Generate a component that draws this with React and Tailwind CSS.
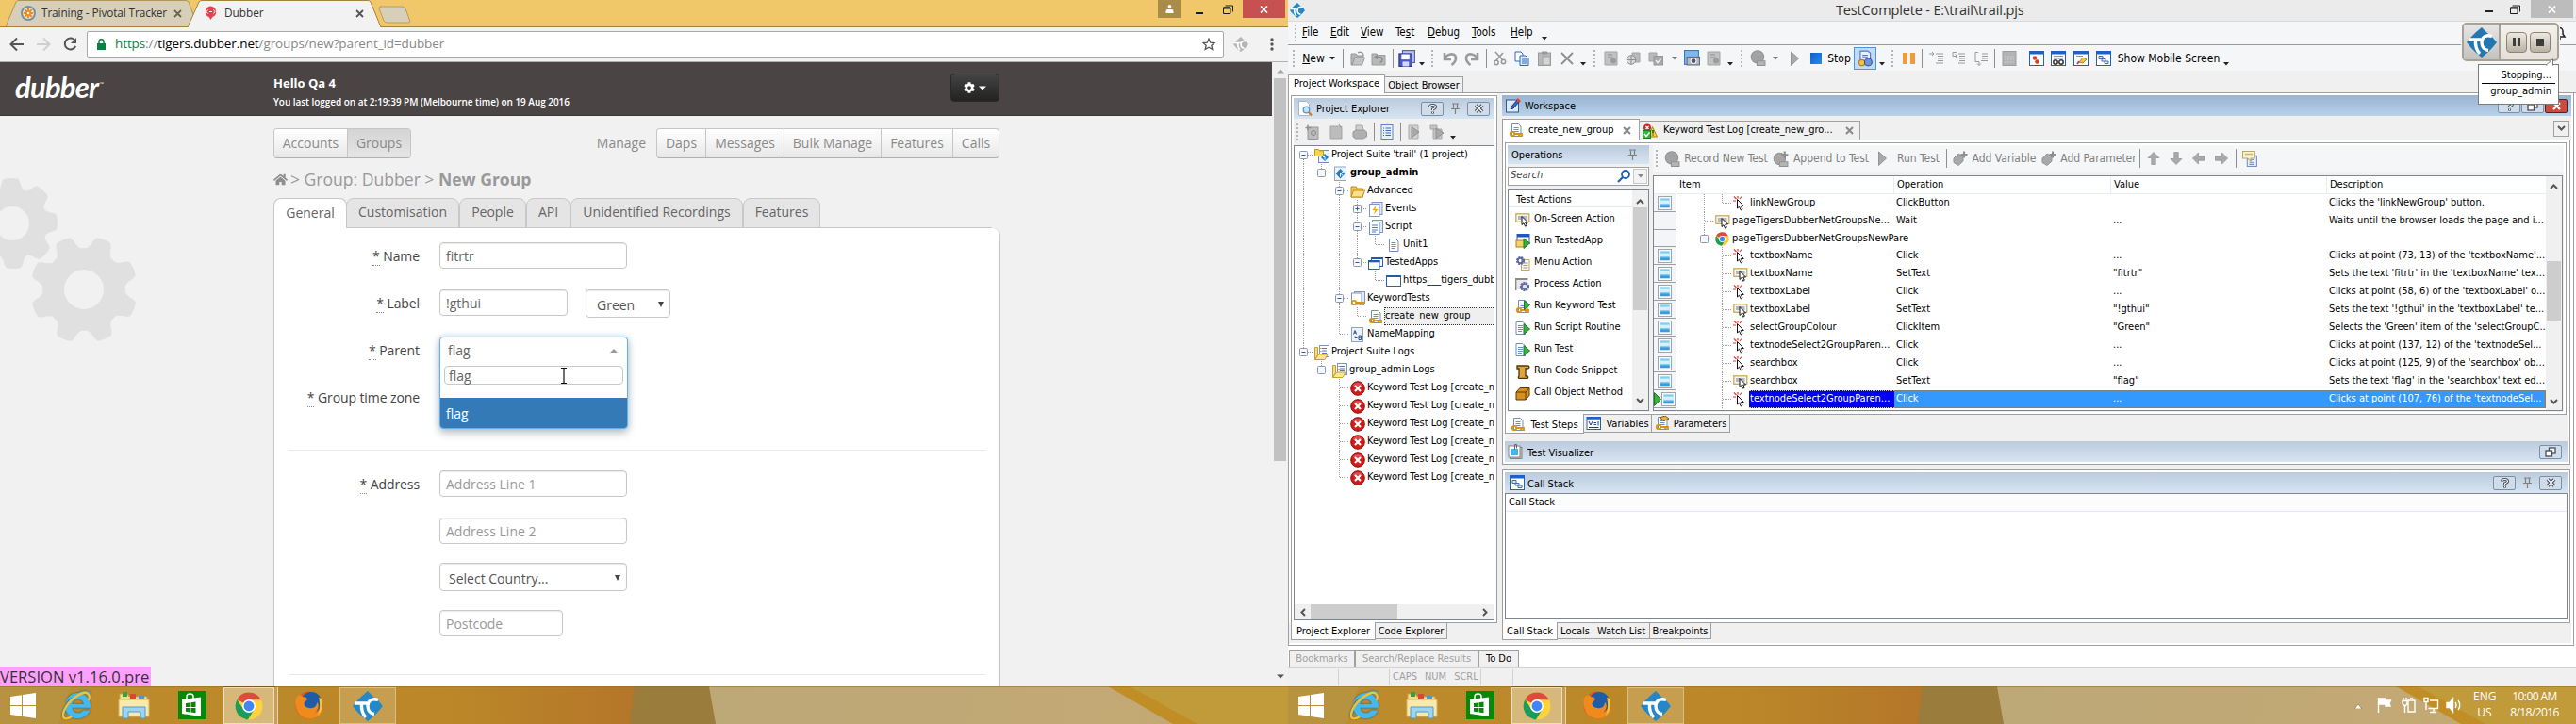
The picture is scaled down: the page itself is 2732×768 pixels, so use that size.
import React from "react";
import { FaInternetExplorer, FaCog, FaHome } from "react-icons/fa";

const UI = "font-['DejaVu_Sans_Condensed','DejaVu_Sans',sans-serif] font-stretch-condensed";

/* ---------- icon set ---------- */
const Svg = ({ s = 16, children, c = "" }) => (
  <svg width={s} height={s} viewBox="0 0 16 16" className={`shrink-0 ${c}`} fill="none">
    {children}
  </svg>
);

const TcLogo = ({ w = 24, h = 24, color = "#2488c8" }) => (
  <svg width={w} height={h} viewBox="0 0 32 32" className="shrink-0" fill="none">
    <path d="M16 0 L22 6 L27 10 L32 16 L27 22 L22 27 L16 32 L10 27 L5 22 L0 16 L5 10 L10 5 Z" fill={color} />
    <path d="M2 13 H15 M9.500 13 C9 19 10 24 14 28" stroke="#fff" strokeWidth="3.400" />
    <path d="M27 9.500 C20 7 16 11 16 16 C16 21 19 24 23 24.500" stroke="#fff" strokeWidth="3.400" />
  </svg>
);

const Chrome = ({ s = 15 }) => (
  <Svg s={s}>
    <circle cx="8" cy="8" r="7.700" fill="#fdd23c" />
    <path d="M8 8 L1.300 4.200 A7.700 7.700 0 0 1 14.800 4.400 L8 4.400 Z" fill="#dd4b3e" />
    <path d="M1.300 4.200 A7.700 7.700 0 0 0 7.400 15.700 L11 9.800 L8 8 L4.900 9.800 Z" fill="#1c9c5a" />
    <circle cx="8" cy="8" r="3.700" fill="#fff" />
    <circle cx="8" cy="8" r="2.900" fill="#4285f4" />
  </Svg>
);

const Page = ({ f = "#fff", k = "#6f8fc4" }) => (
  <>
    <path d="M3.500 1.500 h7 l2.500 2.500 v10.500 h-9.500 z" fill={f} stroke={k} />
    <path d="M5.500 5.500 h5 M5.500 7.500 h5 M5.500 9.500 h5 M5.500 11.500 h4" stroke={k} />
  </>
);
const Key = () => (
  <>
    <circle cx="4" cy="12" r="2.200" stroke="#d9930f" strokeWidth="1.800" />
    <path d="M6.500 12 h7.500 v3 M11 12 v2.500" stroke="#d9930f" strokeWidth="1.800" />
  </>
);

const I = {
  suite: () => (<Svg><rect x="4.500" y="2.500" width="11" height="13" fill="#eef4fc" stroke="#6f8fc4" /><path d="M0.500 1.500 h4 l1 1.500 h4 v5.500 h-9 z" fill="#f8d654" stroke="#c49a28" /><path d="M11 6 l4 4 -4 4 -4 -4 z" fill="#1f7fc0" /><path d="M9 9.500 h2 v3" stroke="#fff" /></Svg>),
  project: () => (<Svg><rect x="2.500" y="1" width="12" height="14.500" fill="#eef4fc" stroke="#8aa4cf" /><path d="M8.500 3 l5 5 -5 5.500 -5 -5.500 z" fill="#1f7fc0" /><path d="M5 7.500 h3.500 v4 M12 6 c-3 0 -3 4 -1 4" stroke="#fff" /></Svg>),
  folder: () => (<Svg><path d="M1 3 h5 l1.500 2 h6 v9 h-12.500 z" fill="#f2c94c" stroke="#b98a1e" /><path d="M3.500 7 h12 l-2.500 7 h-12 z" fill="#fbe28a" stroke="#b98a1e" /></Svg>),
  events: () => (<Svg><rect x="4" y="0.500" width="11" height="13" fill="#dfe9f8" stroke="#7d97c9" /><rect x="1.500" y="2.500" width="10.500" height="13" fill="#fff" stroke="#7d97c9" /><path d="M8.500 4 l-4 5 h3 l-2 5 5 -6 h-3 z" fill="#f5a600" /></Svg>),
  script: () => (<Svg><rect x="4.500" y="0.500" width="11" height="13" fill="#dfe9f8" stroke="#7d97c9" /><rect x="1.500" y="2.500" width="10.500" height="13" fill="#fff" stroke="#6f8fc4" /><path d="M4 6 h6 M4 8.500 h6 M4 11 h6 M4 13 h4" stroke="#5577bb" /></Svg>),
  unit: () => (<Svg><Page /></Svg>),
  apps: () => (<Svg><rect x="3.500" y="2.500" width="12" height="9" fill="#fff" stroke="#2d62a8" /><path d="M3 3 h13" stroke="#1f5cb0" strokeWidth="2" /><rect x="0.500" y="5.500" width="11.500" height="9" fill="#fff" stroke="#2d62a8" /><path d="M0 6.200 h12.500" stroke="#1f5cb0" strokeWidth="2.200" /></Svg>),
  app: () => (<Svg><rect x="0.500" y="2.500" width="15" height="11" fill="#fff" stroke="#2d62a8" /><path d="M0 3 h16" stroke="#1f5cb0" strokeWidth="2" /></Svg>),
  kts: () => (<Svg><rect x="4.500" y="0.500" width="11" height="13" fill="#dfe9f8" stroke="#7d97c9" /><rect x="1.500" y="2" width="10.500" height="12" fill="#fff" stroke="#7d97c9" /><Key /></Svg>),
  kt: () => (<Svg><Page /><Key /></Svg>),
  nm: () => (<Svg><rect x="1.500" y="0.500" width="12" height="15" fill="#eef3fb" stroke="#8aa4cf" /><path d="M3.500 7.500 l1.500 -4 1.500 4 M4 6 h2.500 M9 9 h2.500 v4.500 H9 z M9 11.200 h2.500 M5 9.500 v2 h2.500" stroke="#33507f" /></Svg>),
  logs: () => (<Svg><rect x="5.500" y="0.500" width="10" height="12" fill="#fff" stroke="#7d97c9" /><path d="M8 3.500 h5 M8 6 h5 M8 8.500 h5" stroke="#5577bb" /><path d="M7 3 v1 M7 6 v1" stroke="#d33" /><path d="M0.500 2.500 h3 v8 l-3 5 z" fill="#f6dd7e" stroke="#c79f35" /><path d="M0.500 15.500 l4 -5.500 h9.500 l-3 5.500 z" fill="#fbe795" stroke="#c79f35" /></Svg>),
  err: () => (<Svg><circle cx="8" cy="8" r="7.300" fill="#d11b1b" stroke="#8f1010" /><path d="M2.500 5 a6 5 0 0 1 11 0 a12 6 0 0 1 -11 0" fill="#ec6a6a" opacity=".6" /><path d="M5 5 l6 6 M11 5 l-6 6" stroke="#fff" strokeWidth="2.200" /></Svg>),
  click: () => (<Svg><path d="M0 5 h3 M1 0.500 l2.500 2.500 M5 0 v2.500 M9 0.500 l-2 2.500" stroke="#e23b2e" strokeWidth="1.200" /><path d="M4.500 3.500 v9.500 l2 -1.800 1.800 3.800 1.700 -1 -1.700 -3.500 h3 z" fill="#fff" stroke="#111" /></Svg>),
  screen: () => (<Svg><rect x="0.800" y="1.800" width="14" height="8.500" fill="#f1f3f6" stroke="#c7a54c" strokeWidth="1.200" /><rect x="3" y="4" width="9.500" height="4" fill="#b5b8be" /><path d="M7 4.500 v9 l2 -1.800 1.600 3.500 1.700 -1 -1.600 -3.200 h2.800 z" fill="#fff" stroke="#111" /></Svg>),
  runapp: () => (<Svg><rect x="2" y="0.500" width="13" height="10" fill="#fff" stroke="#2a5fc0" /><path d="M2 2 h13" stroke="#1e55c4" strokeWidth="3" /><rect x="1" y="7" width="9" height="7" fill="#f4d560" stroke="#a6842a" /><path d="M9 5 l6.500 5 -6.500 5.500 z" fill="#35b33c" stroke="#1b7a22" /></Svg>),
  menu: () => (<Svg><rect x="6.500" y="4.500" width="8.500" height="11" fill="#fdf6e3" stroke="#c7a55c" /><path d="M8.500 8 h5 M8.500 10.500 h5 M8.500 13 h5" stroke="#8b98b8" /><circle cx="5.500" cy="5.500" r="3.500" stroke="#5a6aa8" strokeWidth="2.200" strokeDasharray="2 .8" /><circle cx="5.500" cy="5.500" r="2.600" stroke="#5a6aa8" strokeWidth="1.600" /></Svg>),
  proc: () => (<Svg><path d="M0.500 14 v-12 h13" stroke="#8b8b8b" strokeWidth="2" /><rect x="2" y="3" width="11" height="10" fill="#e9e9e9" /><circle cx="10" cy="10" r="4" stroke="#5a6aa8" strokeWidth="2.200" strokeDasharray="2 .8" /><circle cx="10" cy="10" r="3" stroke="#5a6aa8" strokeWidth="1.600" /></Svg>),
  runkt: () => (<Svg><Page /><Key /><path d="M9.500 2 l6 4.500 -6 5 z" fill="#35b33c" stroke="#1b7a22" /></Svg>),
  runscr: () => (<Svg><g transform="translate(-2.500 0)"><Page /></g><path d="M9 3.500 l6.500 5.500 -6.500 5.500 z" fill="#35b33c" stroke="#1b7a22" /></Svg>),
  snip: () => (<Svg><path d="M2 2 h11 a2 1.500 0 0 1 0 3 h-2 v8 h2 a1.500 1.500 0 0 1 0 2.500 h-9 a1.500 1.500 0 0 1 0 -2.500 v-8 h-2 z" fill="#e0a63a" stroke="#4d3410" strokeWidth="1.300" /></Svg>),
  box: () => (<Svg><path d="M1 7 l4 -4.500 h10 v8 l-4 4.500 h-10 z" fill="#d88f1d" stroke="#5a3a08" /><path d="M1 7 h10 l4 -4.500 M11 7 v8" stroke="#5a3a08" /></Svg>),
  shot: () => (<Svg s={15}><rect x="0.500" y="0.500" width="15" height="15" fill="#fafbfc" stroke="#9ba0a8" /><rect x="2.500" y="2.500" width="11" height="10.500" fill="#7fd0f0" /><rect x="2.500" y="5" width="11" height="3.500" fill="#d8f1fb" /><rect x="2.500" y="10" width="11" height="3" fill="#3f98dc" /></Svg>),
  log: () => (<Svg><circle cx="5" cy="4.500" r="4" fill="#d8232a" /><path d="M3.500 3 l3 3 M6.500 3 l-3 3" stroke="#fff" strokeWidth="1.300" /><path d="M10.500 3.500 l5 10.500 h-9 z" fill="#f8d433" stroke="#a8850f" /><path d="M11 7 v3.500 M11 11.500 v1" stroke="#222" strokeWidth="1.300" /><rect x="0.500" y="7.500" width="8" height="8" fill="#35b33c" stroke="#1b7a22" /><path d="M2 11 l2 2.500 3.500 -4" stroke="#fff" strokeWidth="1.500" /></Svg>),
  pen: () => (<Svg><rect x="0.500" y="2" width="13" height="13" fill="#dde9fb" stroke="#34558f" /><path d="M5 12 l1 -3 6.500 -7.500 2 2 -6.500 7.500 z" fill="#3a66c9" stroke="#1d3566" /><path d="M12 1 l3 3" stroke="#e0452e" strokeWidth="2.500" /></Svg>),
  vars: () => (<Svg><rect x="1" y="1.500" width="14.500" height="13" fill="#fff" stroke="#1d63c4" /><path d="M1 2.500 h14.500" stroke="#1d63c4" strokeWidth="2.500" /><path d="M3 6 l2 4 2 -4 M8.500 7.500 h2.500 M8.500 9.500 h2.500 M13 6 v4.500 M3 12.500 h10.500" stroke="#1c3c78" /></Svg>),
  params: () => (<Svg><Page /><Key /><path d="M5 2 l6 -2 4 3 -5 2.500 z" fill="#e8b63a" stroke="#7a5a10" /></Svg>),
  vis: () => (<Svg><rect x="2.500" y="3.500" width="12.500" height="12" fill="#bbb" stroke="#888" /><rect x="1" y="2" width="12" height="12" fill="#fff" stroke="#888" /><rect x="3" y="5" width="8" height="7" fill="#45b4e8" /><path d="M7.500 5.500 v-5 h2 v4" stroke="#667" /></Svg>),
  stack: () => (<Svg><rect x="0.500" y="0.500" width="15" height="15" fill="#fff" stroke="#1d63c4" /><path d="M0.500 2 h15" stroke="#1d63c4" strokeWidth="3" /><path d="M3 5.500 h4 v3 h-4 z M6 8.500 h4 v2.500 h-4 z M9 11 h4 v2.500 h-4 z" fill="#dde8fa" stroke="#466db0" /></Svg>),
  explorer: () => (<Svg><path d="M1.500 0.500 h8 l3 3 v12 h-11 z" fill="#fff" stroke="#a9b6c8" /><circle cx="9.500" cy="9.500" r="3.300" fill="#bfe3f7" stroke="#5e93bd" strokeWidth="1.300" /><path d="M12 12 l3 3.500" stroke="#d07830" strokeWidth="2" /></Svg>),
  blueDoc: () => (<Svg><rect x="2" y="0.500" width="12" height="15" fill="#e8f0fc" stroke="#5d83c6" /><path d="M4 4 h1 M4 6.500 h1 M4 9 h1 M4 11.500 h1 M6.500 4 h5.500 M6.500 6.500 h5.500 M6.500 9 h5.500 M6.500 11.500 h5.500" stroke="#3c66b3" /></Svg>),
  gNew: () => (<Svg><path d="M3 3 h11 v12.500 h-11 z" fill="#bdbdbd" stroke="#9a9a9a" /><path d="M3 0.500 v6 M0.500 3.500 h6" stroke="#8f8f8f" strokeWidth="1.500" /><circle cx="9" cy="9" r="2.500" stroke="#8a8a8a" /></Svg>),
  gPage: () => (<Svg><path d="M2 2 h10 l2 2 v11 h-12 z" fill="#bcbcbc" stroke="#a5a5a5" /><path d="M11 0 l1.500 2 2 1" stroke="#999" /></Svg>),
  gPrint: () => (<Svg><path d="M4 1 h7 l1 6 h-8 z" fill="#cfcfcf" stroke="#a5a5a5" /><path d="M1 8 l3 -2 h9 l2.500 2 v5 l-4 2 h-8 l-2.500 -2 z" fill="#b0b0b0" stroke="#989898" /></Svg>),
  gPlay1: () => (<Svg><path d="M2 1 h10 v14 h-10 z" fill="#d2d2d2" stroke="#a8a8a8" /><path d="M5 2.500 l8 5.500 -8 6 z" fill="#a9a9a9" stroke="#929292" /></Svg>),
  gPlay2: () => (<Svg><path d="M1 1 h7 v4 h-7 z M4 5 h9 v10 h-9 z" fill="#c4c4c4" stroke="#a8a8a8" /><path d="M7 4 l8 5 -8 5.500 z" fill="#a9a9a9" stroke="#929292" /></Svg>),
  open: () => (<Svg><path d="M1 3 h5 l2 2 h6 v2 h-9 l-3 8 h-1 z" fill="#b5b5b5" stroke="#999" /><path d="M5 7 h10.500 l-3 8 h-10.500 z" fill="#c4c4c4" stroke="#999" /><path d="M8 2 c3 -2 6 0 6 3" stroke="#999" strokeWidth="1.500" /></Svg>),
  reopen: () => (<Svg><path d="M1 3 h5 l1.500 1.500 h7.500 v10.500 h-14 z" fill="#b8b8b8" stroke="#9c9c9c" /><path d="M5 6.500 h4 q3 0 3 3 q0 2 -2.500 3 M7 4.500 l-2.500 2 2.500 2" stroke="#8a8a8a" strokeWidth="1.400" /></Svg>),
  save: () => (<Svg s={18}><rect x="4" y="0.500" width="11.500" height="11.500" fill="#b9c0ea" stroke="#5560b4" /><rect x="0.800" y="3.500" width="12" height="12" fill="#4d5ac4" stroke="#2c368c" /><rect x="3" y="4" width="7.500" height="5" fill="#fff" /><rect x="4" y="11" width="6" height="4.500" fill="#d5d9f5" /></Svg>),
  undo: () => (<Svg><path d="M2 2 v7 h7 M2.500 8.500 C4 3 13 1 14 7 C14.500 11 12 13 9.500 15" stroke="#9b9b9b" strokeWidth="2.600" /></Svg>),
  redo: () => (<Svg c="-scale-x-100"><path d="M2 2 v7 h7 M2.500 8.500 C4 3 13 1 14 7 C14.500 11 12 13 9.500 15" stroke="#9b9b9b" strokeWidth="2.600" /></Svg>),
  cut: () => (<Svg><path d="M3 1 l8 9 M11 2 l-7 8" stroke="#999" strokeWidth="1.700" /><circle cx="4" cy="12.500" r="2.200" stroke="#999" strokeWidth="1.500" /><circle cx="11.500" cy="11.500" r="2.200" stroke="#999" strokeWidth="1.500" /></Svg>),
  copy: () => (<Svg><path d="M1 1 h6 l2 2 v8 h-8 z" fill="#fff" stroke="#2f66c4" /><path d="M6 5 h6 l3 3 v7.500 h-9 z" fill="#dfeafc" stroke="#2f66c4" /><path d="M8 9 h5 M8 11 h5 M8 13 h5" stroke="#2f66c4" /></Svg>),
  paste: () => (<Svg><rect x="1.500" y="2" width="13" height="13.500" fill="#b9b9b9" stroke="#999" /><rect x="5" y="0.500" width="6" height="3" fill="#999" /><rect x="6" y="6" width="8" height="9" fill="#d5d5d5" stroke="#a4a4a4" /></Svg>),
  del: () => (<Svg><path d="M2 2 l12 12 M14 2 l-12 12" stroke="#8e8e8e" strokeWidth="1.800" /></Svg>),
  g1: () => (<Svg><path d="M1 1 h13 v14 h-13 z" fill="#c2c2c2" stroke="#a3a3a3" /><path d="M4 4 h5 M4 7 h6" stroke="#8f8f8f" /><circle cx="10" cy="10.500" r="3" fill="#9c9c9c" /></Svg>),
  g2: () => (<Svg><path d="M7 2 h8 v10 h-8 z" fill="#b9b9b9" stroke="#a3a3a3" /><circle cx="6" cy="9.500" r="4.800" fill="#d8d8d8" stroke="#8f8f8f" /><path d="M1 9.500 h10 M6 5 v9" stroke="#8f8f8f" /></Svg>),
  g3: () => (<Svg><path d="M1 2 h8 v9 h-8 z" fill="#bbb" stroke="#a3a3a3" /><rect x="6" y="5.500" width="9.500" height="9.500" fill="#a9a9a9" stroke="#979797" /><path d="M8 10 l2 2.500 3.500 -4" stroke="#ececec" strokeWidth="1.500" /></Svg>),
  cam: () => (<Svg s={17}><rect x="0.500" y="0.500" width="14" height="14" fill="#7db9ec" stroke="#3f78bd" /><rect x="3" y="7" width="12.500" height="8" fill="#b5bac2" stroke="#666e7a" /><circle cx="9.500" cy="11" r="2.700" fill="#4e5663" stroke="#eef" /></Svg>),
  rec: () => (<Svg s={17}><circle cx="7.500" cy="7" r="6.300" fill="#a3a3a3" stroke="#929292" /><path d="M7 11 h8 v4.500 h-8 z" fill="#b5b5b5" stroke="#929292" /></Svg>),
  play: () => (<Svg><path d="M4.500 1 l8 7 -8 7.500 z" fill="#a9a9a9" stroke="#939393" /></Svg>),
  active: () => (<Svg s={18}><path d="M3.500 1 h7 l2.500 2 v11 h-9.500 z" fill="#e9f0fb" stroke="#5577bb" /><path d="M5.500 5 h5 M5.500 7 h5" stroke="#5577bb" /><circle cx="5" cy="12" r="2.800" fill="#f3c243" stroke="#b0831a" /><circle cx="11" cy="11.500" r="3.500" fill="#6e95d8" stroke="#33569c" /></Svg>),
  step: () => (<Svg><path d="M0 3 h5 M3 1 l2 2 -2 2" stroke="#9a9a9a" /><path d="M7 3 h8 M9 5.500 h6 M9 8 h6 M9 10.500 h6 M7 13 h8" stroke="#9a9a9a" strokeWidth="1.200" /></Svg>),
  step2: () => (<Svg><path d="M6 1.500 h-4 v4 h4 M4.500 3.500 l2 2 -2 2" stroke="#9a9a9a" /><path d="M8 3 h7 M9 5.500 h6 M9 8 h6 M9 10.500 h6 M8 13 h7" stroke="#9a9a9a" strokeWidth="1.200" /></Svg>),
  step3: () => (<Svg><path d="M5 1.500 h-3 v10 h4 v4 M4 13.500 l2 2 2 -2" stroke="#9a9a9a" /><path d="M9 3 h6 M9 5.500 h6 M9 8 h6 M8 10.500 h7" stroke="#9a9a9a" strokeWidth="1.200" /></Svg>),
  gcalc: () => (<Svg><rect x="1" y="0.500" width="14" height="15" fill="#b3b3b3" stroke="#9e9e9e" /><path d="M3 6 h10 M3 9 h10 M3 12 h10" stroke="#cfcfcf" strokeDasharray="2 1" /></Svg>),
  w1: () => (<Svg><rect x="0.500" y="0.500" width="15" height="15" fill="#fff" stroke="#1d63c4" /><path d="M0.500 2 h15" stroke="#1d63c4" strokeWidth="3" /><circle cx="6" cy="7.500" r="2.300" fill="#d4402f" /><circle cx="8.500" cy="11.500" r="2.300" fill="#d4402f" /></Svg>),
  w2: () => (<Svg><rect x="0.500" y="0.500" width="15" height="15" fill="#fff" stroke="#1d63c4" /><path d="M0.500 2 h15" stroke="#1d63c4" strokeWidth="3" /><path d="M3 5.500 h10 M3 8 h10" stroke="#7b96c4" /><circle cx="5" cy="12" r="2.200" stroke="#333" strokeWidth="1.500" /><circle cx="11" cy="12" r="2.200" stroke="#333" strokeWidth="1.500" /></Svg>),
  w3: () => (<Svg><rect x="0.500" y="0.500" width="15" height="15" fill="#fff" stroke="#1d63c4" /><path d="M0.500 2 h15" stroke="#1d63c4" strokeWidth="3" /><path d="M3 5.500 h7" stroke="#7b96c4" /><path d="M6 12 l4 -5 4 2 -4 4 z" fill="#f3c243" stroke="#b0831a" /><path d="M4 14 l2 -3" stroke="#b03bb5" strokeWidth="2" /></Svg>),
  addv: () => (<Svg><path d="M1 8 l5 -5 5 3 v5 l-5 4.500 -5 -3 z" fill="#a9a9a9" stroke="#959595" /><path d="M12 0.500 v7 M8.500 4 h7" stroke="#8e8e8e" strokeWidth="2" /></Svg>),
  apprec: () => (<Svg s={17}><circle cx="7" cy="8" r="5.800" fill="#a6a6a6" stroke="#929292" /><path d="M7 11 h8 v4.500 h-8 z" fill="#b5b5b5" stroke="#929292" /><path d="M12 0.500 v7 M8.500 4 h7" stroke="#8e8e8e" strokeWidth="2" /></Svg>),
  up: (r) => (<Svg c={r}><path d="M8 1.500 l6 6 h-3.800 v7 h-4.400 v-7 h-3.800 z" fill="#a9a9a9" stroke="#989898" strokeWidth=".8" /></Svg>),
  note: () => (<Svg s={17}><rect x="5" y="5" width="9.500" height="10.500" fill="#e8f0fc" stroke="#7290c4" /><path d="M7 9 h5 M7 11.500 h5 M7 13.500 h5" stroke="#7290c4" /><path d="M0.500 0.500 h12 v7 h-4 v3 l-3 -3 h-5 z" fill="#fbf5da" stroke="#b9a564" /><path d="M2.500 3 h8 M2.500 5 h8" stroke="#b9a564" /></Svg>),
};

/* ---------- small building blocks ---------- */
const Grip = () => <div className="w-[2px] h-[18px] bg-[repeating-linear-gradient(180deg,#b4b4b4_0px,#b4b4b4_2px,transparent_2px,transparent_4px)]" />;
const Sep = () => <div className="w-px h-5 bg-[#8f8f8f]" />;
const C = ({ w, children, c = "" }) => <div className={`shrink-0 h-full flex items-center justify-center ${w} ${c}`}>{children}</div>;
const Down = ({ f = "#222" }) => <svg width="6" height="4" viewBox="0 0 6 4"><path d="M0 0 h6 l-3 3.500 z" fill={f} /></svg>;
const Low = () => <div className="pt-3"><Down /></div>;
const Chev = ({ r = "" }) => <svg width="9" height="7" viewBox="0 0 9 7" className={r}><path d="M1 1 l3.500 3.500 3.500 -3.500" fill="none" stroke="#555" strokeWidth="2" /></svg>;
const Pin = () => <svg width="11" height="12" viewBox="0 0 11 12" fill="none"><path d="M2 1 h7 M3.500 1 v5 M7.500 1 v5 M1 6.500 h9 M5.500 7 v5" stroke="#808080" strokeWidth="1.200" /></svg>;
const Btn = ({ t }) => (
  <div className="w-6 h-[15px] rounded-[2px] border border-[#7f8ea8] bg-[#cfdcea] flex items-center justify-center">
    {t === "?" && <svg width="9" height="11" viewBox="0 0 9 11" fill="none"><path d="M1.500 3.500 Q1.500 1.500 4.500 1.500 Q7.500 1.500 7.500 3.500 Q7.500 4.800 4.500 6 V7 M4.500 8.500 v2" stroke="#444c5a" strokeWidth="3" /><path d="M1.500 3.500 Q1.500 1.500 4.500 1.500 Q7.500 1.500 7.500 3.500 Q7.500 4.800 4.500 6 V7 M4.500 8.700 v1.300" stroke="#fff" strokeWidth="1.200" /></svg>}
    {t === "x" && <svg width="11" height="10" viewBox="0 0 11 10"><path d="M2 1.500 l7 7 M9 1.500 l-7 7" stroke="#444c5a" strokeWidth="3.600" /><path d="M2 1.500 l7 7 M9 1.500 l-7 7" stroke="#fff" strokeWidth="1.400" /></svg>}
    {t === "r" && <svg width="12" height="11" viewBox="0 0 12 11" fill="none"><rect x="4.500" y="1" width="6.500" height="6" fill="#fff" stroke="#444c5a" strokeWidth="1.300" /><rect x="1" y="4" width="6.500" height="6" fill="#fff" stroke="#444c5a" strokeWidth="1.300" /></svg>}
  </div>
);
const Restore = () => <svg width="11" height="10" viewBox="0 0 11 10" fill="none"><path d="M0.500 3 h7.500 v6.500 h-7.500 z M2.500 1 h8 v6.500" stroke="#1b1b1b" /><path d="M0.500 3.500 h7.500" stroke="#1b1b1b" strokeWidth="2" /></svg>;

/* one 19px wide cell of tree guide lines */
const Guide = ({ k }) => {
  const ln = { stroke: "#9a9a9a", strokeDasharray: "1 1" };
  const box = "eEPf".includes(k);
  return (
    <svg width="19" height="19" viewBox="0 0 19 19" className="shrink-0" fill="none">
      {"|tEP".includes(k) && <path d="M9.500 0 v19" {...ln} />}
      {"le".includes(k) && <path d="M9.500 0 v9" {...ln} />}
      {k === "f" && <path d="M9.500 10 v9" {...ln} />}
      {k !== "|" && k !== " " && <path d="M10 9.500 h9" {...ln} />}
      {box && <rect x="5.500" y="5.500" width="8" height="8" rx="1" fill="#f6f8fb" stroke="#8e99a8" />}
      {box && <path d="M7.500 9.500 h4" stroke="#3355a8" />}
      {k === "P" && <path d="M9.500 7.500 v4" stroke="#3355a8" />}
    </svg>
  );
};

/* ---------- browser window ---------- */
const field = "border border-[#c8c8c8] rounded-[4px] bg-white flex items-center text-[14px] shadow-[inset_0_1px_1px_rgba(0,0,0,0.08)] font-['Open_Sans',sans-serif]";
const Label = ({ children }) => (
  <div className="w-[154px] text-right text-[14px] leading-5 text-[#444] pt-[5px] tracking-[-0.1px]">
    {children && <><span className="border-b border-dotted border-[#888]">*</span> {children}</>}
  </div>
);
const navGroup = "flex border border-[#c6c6c6] border-b-[#b0b0b0] rounded-[4px] overflow-hidden [&>div]:pb-px";

function Browser() {
  return (
    <div className="w-[1366px] h-[728px] flex flex-col bg-[#f1f1f1] font-['Open_Sans',sans-serif] overflow-hidden">
      <div className="h-[29px] bg-[#f0c869] border-b border-[#a5833b] flex shrink-0 relative">
        <div className="relative w-[202px] h-[29px] ml-1">
          <svg className="absolute left-0 top-0" width="206" height="28" viewBox="0 0 206 28"><path d="M2 28.500 L13 2 Q14 0.500 16 0.500 H193 Q195 0.500 196 2 L206 28.500" fill="#d8cfb8" stroke="#b09557" /></svg>
          <div className="relative flex items-center h-full pl-[18px] pb-px text-[11.800px] text-[#333] tracking-[-0.1px]">
            <svg width="16" height="16" viewBox="0 0 16 16" className="mr-1.5"><circle cx="8" cy="8" r="7" fill="#f4e5cf" stroke="#6f93a8" strokeWidth="2" /><path d="M8 2.800 v10.400 M2.800 8 h10.400 M4.300 4.300 l7.400 7.400 M11.700 4.300 l-7.400 7.400" stroke="#f08a24" strokeWidth="2.200" /><circle cx="8" cy="8" r="1.200" fill="#fff" /></svg>
            <span className="w-[140px] whitespace-nowrap">Training - Pivotal Tracker</span>
            <svg width="9" height="9" viewBox="0 0 9 9"><path d="M1 1 l7 7 M8 1 l-7 7" stroke="#6b6552" strokeWidth="1.800" /></svg>
          </div>
        </div>
        <div className="relative w-[196px] h-[29px] -ml-[7px]">
          <svg className="absolute left-0 top-0" width="206" height="29" viewBox="0 0 206 29"><path d="M0 29 L12 2 Q13 0.500 15 0.500 H191 Q193 0.500 194 2 L205 29" fill="#f2f2f2" stroke="#a5833b" /><path d="M1 28.500 h203" stroke="#f2f2f2" strokeWidth="1.500" /></svg>
          <div className="relative flex items-center h-full pl-[18px] pb-px text-[11.800px] text-[#333]">
            <svg width="13" height="16" viewBox="0 0 13 16" className="mr-2"><path d="M6.500 0.500 a6 6 0 0 1 2 11.500 l-2 3 -2 -3 a6 6 0 0 1 2 -11.500" fill="#e8414f" /><path d="M3.500 4.500 l-1.500 2 1.500 2 M9.500 4.500 l1.500 2 -1.500 2 M5 6.500 h3" stroke="#fff" fill="none" /></svg>
            <span className="w-[139px]">Dubber</span>
            <svg width="9" height="9" viewBox="0 0 9 9"><path d="M1 1 l7 7 M8 1 l-7 7" stroke="#555" strokeWidth="1.800" /></svg>
          </div>
        </div>
        <svg className="ml-[6px] mt-[6px]" width="37" height="19" viewBox="0 0 37 19"><path d="M2 1 H25 Q28 1 29 3 L34 17 Q34 18 32 18 H10 Q7 18 6 16 L1 3 Q1 1 3 1 Z" fill="#d8cfb8" stroke="#b79c5c" /></svg>
        <div className="ml-auto flex h-[19px]">
          <div className="w-6 bg-[#a88c47] flex items-center justify-center"><svg width="9" height="9" viewBox="0 0 9 9" fill="#fff"><circle cx="4.500" cy="2" r="1.900" /><path d="M0.500 9 v-2 q0 -2 2 -2 h4 q2 0 2 2 v2 z" /></svg></div>
          <div className="w-10 flex items-center justify-center pt-2"><div className="w-2 h-[2px] bg-[#1b1b1b]" /></div>
          <div className="w-5 flex items-center justify-center"><Restore /></div>
          <div className="w-[45px] ml-1.5 bg-[#c75050] flex items-center justify-center mr-[3px]"><svg width="9" height="8" viewBox="0 0 9 8"><path d="M1 0.500 l7 7 M8 0.500 l-7 7" stroke="#fff" strokeWidth="1.700" /></svg></div>
        </div>
      </div>
      <div className="h-[37px] shrink-0 border-b border-[#b2b2b2] bg-[#f2f2f2] flex items-center">
        <svg width="92" height="20" viewBox="0 0 92 20" fill="none">
          <path d="M25 10 H12 M18 3.500 L11.500 10 L18 16.500" stroke="#555" strokeWidth="2" />
          <path d="M39 10 H52 M46 3.500 L52.500 10 L46 16.500" stroke="#cfcfcf" strokeWidth="2" />
          <path d="M80 6.500 A6 6 0 1 0 80.200 12" stroke="#555" strokeWidth="2" /><path d="M81 3 v6 h-6 z" fill="#555" />
        </svg>
        <div className="w-[1206px] h-7 bg-white border border-[#a9a9a9] rounded-[2px] flex items-center pl-2.5 pr-2 text-[13.500px]">
          <svg width="9" height="12" viewBox="0 0 9 12" className="mr-2.5"><path d="M0 5 h9 v7 h-9 z" fill="#0b8043" /><path d="M2 5 v-2 a2.500 2.300 0 0 1 5 0 v2" fill="none" stroke="#0b8043" strokeWidth="1.500" /></svg>
          <span className="text-[#888] grow whitespace-nowrap tracking-[-0.1px] pb-px"><span className="text-[#0b8043]">https</span>://<span className="text-black">tigers.dubber.net</span>/groups/new?parent_id=dubber</span>
          <svg width="14" height="14" viewBox="0 0 14 14"><path d="M7 1.200 L8.700 5.200 L13 5.500 L9.800 8.200 L10.800 12.500 L7 10.200 L3.200 12.500 L4.200 8.200 L1 5.500 L5.300 5.200 Z" fill="none" stroke="#555" strokeWidth="1.300" /></svg>
        </div>
        <div className="ml-[10px]"><TcLogo w={16} h={16} color="#b5b5b5" /></div>
        <svg width="4" height="14" viewBox="0 0 4 14" className="ml-[23px]" fill="#555"><circle cx="2" cy="2" r="1.700" /><circle cx="2" cy="7" r="1.700" /><circle cx="2" cy="12" r="1.700" /></svg>
      </div>
      <div className="flex grow min-h-0">
        <div className="w-[1349px] flex flex-col relative">
          <div className="h-[57px] shrink-0 bg-[#4a4544] border-b border-[#3a3434] flex">
            <div className="w-[290px] pl-[16px] pt-[8px] flex items-start text-white">
              <span className="font-['Lato',sans-serif] italic font-bold text-[31px] leading-9 tracking-[-0.8px] w-[92px]">dubber</span>
              <span className="text-[5px] leading-none mt-[13px] -ml-[2px]">™</span>
            </div>
            <div className="w-[718px] flex flex-col text-white pt-[13px] font-semibold">
              <span className="text-[13px] leading-[18px] font-bold">Hello Qa 4</span>
              <span className="text-[10px] leading-[14px] mt-[4px] tracking-[-0.05px]">You last logged on at 2:19:39 PM (Melbourne time) on 19 Aug 2016</span>
            </div>
            <div className="mt-3 w-[52px] h-[30px] rounded-[4px] border border-[#2b2727] bg-linear-to-b from-[#444] to-[#222] flex items-center justify-center gap-1 text-white">
              <FaCog size={12} /><svg width="8" height="5" viewBox="0 0 8 5"><path d="M0 0.500 h8 l-4 4 z" fill="#fff" /></svg>
            </div>
          </div>
          <div className="flex grow min-h-0">
            <div className="w-[290px] flex flex-col justify-between">
              <svg width="160" height="250" viewBox="0 0 160 250" className="pointer-events-none">
                {[[13, 114, 48, 18, 37, -2], [89, 184, 57, 21, 44, 22]].map(([cx, cy, R, r, b, a]) => (
                  <g key={cx}>
                    {[0, 45, 90, 135, 180, 225, 270, 315].map((d) => (
                      <path key={d} transform={`rotate(${d + a} ${cx} ${cy})`} d={`M${cx - 17} ${cy - b + 7} Q${cx - 10} ${cy - b - 1} ${cx - 10} ${cy - R + 5} L${cx - 8} ${cy - R + 1} Q${cx} ${cy - R - 1} ${cx + 8} ${cy - R + 1} L${cx + 10} ${cy - R + 5} Q${cx + 10} ${cy - b - 1} ${cx + 17} ${cy - b + 7} Z`} fill="#e0e0e0" />
                    ))}
                    <circle cx={cx} cy={cy} r={(b + r) / 2} fill="none" stroke="#e0e0e0" strokeWidth={b - r} />
                  </g>
                ))}
              </svg>
              <div className="w-[160px] h-5 bg-[#ff9fff] text-[16.600px] leading-5 text-[#333] whitespace-nowrap">VERSION v1.16.0.pre</div>
            </div>
            <div className="w-[771px] flex flex-col pt-[13px]">
              <div className="flex h-8 text-[14px] text-[#8a8a8a]">
                <div className={`${navGroup} w-[146px]`}>
                  <div className="w-[78px] flex items-center justify-center bg-linear-to-b from-white to-[#e8e8e8] border-r border-[#c6c6c6]">Accounts</div>
                  <div className="grow flex items-center justify-center bg-linear-to-b from-[#d4d4d4] to-[#e6e6e6]">Groups</div>
                </div>
                <div className="ml-auto flex items-center mr-[11px] pb-px">Manage</div>
                <div className={`${navGroup} w-[364px] bg-linear-to-b from-white to-[#e8e8e8] mr-px`}>
                  <div className="w-[52px] flex items-center justify-center border-r border-[#c6c6c6]">Daps</div>
                  <div className="w-[83px] flex items-center justify-center border-r border-[#c6c6c6]">Messages</div>
                  <div className="w-[103px] flex items-center justify-center border-r border-[#c6c6c6]">Bulk Manage</div>
                  <div className="w-[76px] flex items-center justify-center border-r border-[#c6c6c6]">Features</div>
                  <div className="grow flex items-center justify-center">Calls</div>
                </div>
              </div>
              <div className="flex items-center h-[42px] pt-[3px] text-[17.600px] text-[#999] whitespace-nowrap tracking-[-0.02px]">
                <FaHome size={15} className="mr-[3px] text-[#8e8e8e]" />
                <span>&gt; Group: Dubber &gt; <b>New Group</b></span>
              </div>
              <div className="flex h-[32px] text-[14px] text-[#666] relative [&>div]:pb-[3px]">
                <div className="w-[78px] bg-white border border-b-0 border-[#c8c8c8] rounded-t-[8px] flex items-center justify-center">General</div>
                {[["w-[120px]", "Customisation"], ["w-[71px]", "People"], ["w-[47px]", "API"], ["w-[183px]", "Unidentified Recordings"], ["w-[82px]", "Features"]].map(([w, t]) => (
                  <div key={t} className={`${w} bg-[#e5e5e5] border border-[#c8c8c8] rounded-t-[8px] flex items-center justify-center -ml-px mr-px whitespace-nowrap`}>{t}</div>
                ))}
              </div>
              <div className="grow bg-white border-x border-[#c8c8c8] rounded-tr-[8px] flex flex-col relative">
                <div className="h-px shrink-0 bg-[#c8c8c8] ml-[77px] mr-2 -mt-px" />
                <div className="flex gap-[21px] h-[50px] mt-[15px]"><Label>Name</Label><div className={`${field} w-[199px] h-7 pl-1.5 text-[#666]`}>fitrtr</div></div>
                <div className="flex h-[50px]"><Label>Label</Label><div className={`${field} w-[136px] h-7 ml-[21px] pl-1.5 text-[#666]`}>!gthui</div>
                  <div className={`${field} w-[90px] h-[30px] ml-[19px] pl-[11px] pr-1.5 justify-between text-[#555] pt-0.5`}>Green<svg width="6" height="6" viewBox="0 0 6 6"><path d="M0 0 h6 l-3 6 z" fill="#444" /></svg></div></div>
                <div className="flex h-[50px] relative"><Label>Parent</Label>
                  <div className="absolute left-[175px] top-0 w-[200px] h-[98px] rounded-[4px] border border-[#66afe9] bg-white shadow-[0_5px_10px_rgba(0,0,0,0.2),0_0_7px_rgba(102,175,233,0.45)] text-[14px] text-[#666] flex flex-col overflow-hidden">
                    <div className="h-[27px] flex items-center justify-between pl-2 pr-[10px]">flag<svg width="8" height="4" viewBox="0 0 8 4"><path d="M0 4 h8 l-4 -4 z" fill="#999" /></svg></div>
                    <div className="mx-1 mt-[3px] h-5 border border-[#c8c8c8] rounded-[4px] pl-1 leading-[17px] flex items-center justify-between pr-[58px]">flag
                      <svg width="8" height="17" viewBox="0 0 8 17"><path d="M1 0.500 h6 M1 16.500 h6 M4 0.500 v16" stroke="#111" strokeWidth="1.200" /></svg></div>
                    <div className="mt-[14px] grow bg-[#337ab7] text-white flex items-center pl-1.5">flag</div>
                  </div>
                </div>
                <div className="flex h-[50px]"><Label>Group time zone</Label></div>
                <div className="mx-[15px] h-px shrink-0 bg-[#e8e8e8] mt-[20px]" />
                <div className="flex gap-[21px] h-[50px] mt-[21px]"><Label>Address</Label><div className={`${field} w-[199px] h-7 pl-1.5 text-[#999]`}>Address Line 1</div></div>
                <div className="flex gap-[21px] h-12"><Label /><div className={`${field} w-[199px] h-7 pl-1.5 text-[#999]`}>Address Line 2</div></div>
                <div className="flex gap-[21px] h-[50px]"><Label /><div className={`${field} w-[199px] h-[30px] pl-[9px] pr-1.5 justify-between text-[#555] pt-0.5`}>Select Country...<svg width="6" height="6" viewBox="0 0 6 6"><path d="M0 0 h6 l-3 6 z" fill="#444" /></svg></div></div>
                <div className="flex gap-[21px] h-[50px]"><Label /><div className={`${field} w-[131px] h-7 pl-1.5 text-[#999]`}>Postcode</div></div>
                <div className="mx-[15px] h-px shrink-0 bg-[#e8e8e8] mt-[18px]" />
              </div>
            </div>
          </div>
        </div>
        <div className="w-[17px] bg-[#f1f1f1] flex flex-col items-center">
          <svg width="8" height="5" viewBox="0 0 8 5" className="mt-[7px]"><path d="M0 4.500 h8 l-4 -4 z" fill="#a3a3a3" /></svg>
          <div className="w-[13px] h-[406px] mt-[5px] bg-[#c1c1c1]" />
          <svg width="8" height="5" viewBox="0 0 8 5" className="mt-auto mb-[8px]"><path d="M0 0.500 h8 l-4 4 z" fill="#505050" /></svg>
        </div>
      </div>
    </div>
  );
}

/* ---------- TestComplete window ---------- */
const mainBar = [
  ["w-3", <Grip />], ["w-[30px]", <span><u>N</u>ew</span>], ["w-[10px]", <Down />], ["w-3", <Sep />],
  ["w-5", <I.open />], ["w-[24px]", <I.reopen />], ["w-[6px]", <Sep />], ["w-6", <I.save />], ["w-2", <Low />],
  ["w-[14px]", <Grip />], ["w-[23px]", <I.undo />], ["w-[23px]", <I.redo />], ["w-2", <Sep />], ["w-[22px]", <I.cut />],
  ["w-6", <I.copy />], ["w-6", <I.paste />], ["w-6", <I.del />], ["w-[10px]", <Low />], ["w-[14px]", <Grip />],
  ["w-[22px]", <I.g1 />], ["w-[23px]", <I.g2 />], ["w-[26px]", <I.g3 />], ["w-[13px]", <Down f="#777" />], ["w-6", <I.cam />],
  ["w-6", <I.g1 />], ["w-[10px]", <Low />], ["w-[14px]", <Grip />], ["w-[21px]", <I.rec />], ["w-4", <Down f="#777" />],
  ["w-6", <I.play />], ["w-[21px]", <div className="w-3 h-3 bg-linear-to-br from-[#0a5fc8] to-[#2a8af0]" />], ["w-[29px]", "Stop"],
  ["w-[26px]", <div className="w-6 h-[24px] bg-[#c2dcf5] border border-[#4f93dd] flex items-center justify-center"><I.active /></div>],
  ["w-[9px]", <Low />], ["w-[14px]", <Grip />],
  ["w-[21px]", <div className="flex gap-[3px]"><div className="w-[5px] h-3 bg-[#f09a3a]" /><div className="w-[5px] h-3 bg-[#f09a3a]" /></div>],
  ["w-[7px]", <Sep />], ["w-[23px]", <I.step />], ["w-6", <I.step2 />], ["w-[23px]", <I.step3 />], ["w-[7px]", <Sep />],
  ["w-[23px]", <I.gcalc />], ["w-[6px]", <Sep />], ["w-[23px]", <I.w1 />], ["w-6", <I.w2 />], ["w-6", <I.w3 />], ["w-6", <I.stack />],
  ["w-[114px]", <span>Show Mobile Screen</span>], ["w-[8px]", <Low />],
];

const tree = [
  ["f", "suite", "Project Suite 'trail' (1 project)"],
  ["|e", "project", "group_admin"],
  ["| E", "folder", "Advanced"],
  ["| |P", "events", "Events"],
  ["| |E", "script", "Script"],
  ["| ||l", "unit", "Unit1"],
  ["| |e", "apps", "TestedApps"],
  ["| | l", "app", "https___tigers_dubber_net"],
  ["| E", "kts", "KeywordTests"],
  ["| |l", "kt", "create_new_group"],
  ["| l", "nm", "NameMapping"],
  ["e", "logs", "Project Suite Logs"],
  [" e", "logs", "group_admin Logs"],
  ["  t", "err", "Keyword Test Log [create_new_group]"],
  ["  t", "err", "Keyword Test Log [create_new_group]"],
  ["  t", "err", "Keyword Test Log [create_new_group]"],
  ["  t", "err", "Keyword Test Log [create_new_group]"],
  ["  t", "err", "Keyword Test Log [create_new_group]"],
  ["  l", "err", "Keyword Test Log [create_new_group]"],
];

const ops = [
  ["screen", "On-Screen Action"], ["runapp", "Run TestedApp"], ["menu", "Menu Action"], ["proc", "Process Action"],
  ["runkt", "Run Keyword Test"], ["runscr", "Run Script Routine"], ["runscr", "Run Test"], ["snip", "Run Code Snippet"], ["box", "Call Object Method"],
];

const steps = [
  ["|l", "click", "linkNewGroup", "ClickButton", "", "Clicks the 'linkNewGroup' button."],
  ["t", "screen", "pageTigersDubberNetGroupsNe...", "Wait", "...", "Waits until the browser loads the page and i..."],
  ["e", "chrome", "pageTigersDubberNetGroupsNewPare", "", "", ""],
  [" t", "click", "textboxName", "Click", "...", "Clicks at point (73, 13) of the 'textboxName'..."],
  [" t", "screen", "textboxName", "SetText", '"fitrtr"', "Sets the text 'fitrtr' in the 'textboxName' tex..."],
  [" t", "click", "textboxLabel", "Click", "...", "Clicks at point (58, 6) of the 'textboxLabel' o..."],
  [" t", "screen", "textboxLabel", "SetText", '"!gthui"', "Sets the text '!gthui' in the 'textboxLabel' te..."],
  [" t", "click", "selectGroupColour", "ClickItem", '"Green"', "Selects the 'Green' item of the 'selectGroupC..."],
  [" t", "click", "textnodeSelect2GroupParen...", "Click", "...", "Clicks at point (137, 12) of the 'textnodeSel..."],
  [" t", "click", "searchbox", "Click", "...", "Clicks at point (125, 9) of the 'searchbox' ob..."],
  [" t", "screen", "searchbox", "SetText", '"flag"', "Sets the text 'flag' in the 'searchbox' text ed..."],
  [" t", "click", "textnodeSelect2GroupParen...", "Click", "...", "Clicks at point (107, 76) of the 'textnodeSel..."],
];

const titleGrad = "bg-linear-to-b from-[#bccbdc] to-[#d7e4f2]";
const tabOff = "border border-t-0 border-[#a0a0a0] bg-[#f0f0f0] flex items-center justify-center leading-[15px]";
const tabOn = "border border-t-0 border-[#a0a0a0] bg-white flex items-center justify-center leading-[15px]";

function Explorer() {
  return (
    <div className="w-[221px] flex flex-col pt-0.5 bg-white shrink-0">
      <div className="ml-0.5 w-[219px] h-[560px] border border-[#a0a0a0] p-0.5 flex flex-col shrink-0">
        <div className={`h-[22px] shrink-0 ${titleGrad} flex items-center pl-1`}>
          <I.explorer /><span className="ml-[4px] grow pt-0.5">Project Explorer</span>
          <div className="flex items-center gap-[7px] mr-[5px]"><Btn t="?" /><Pin /><Btn t="x" /></div>
        </div>
        <div className="h-7 shrink-0 bg-[#f0f0f0] flex items-center">
          <C w="w-2"><Grip /></C><C w="w-[24px]"><I.gNew /></C><C w="w-[26px]"><I.gPage /></C><C w="w-6"><I.gPrint /></C><C w="w-[6px]"><Sep /></C>
          <C w="w-[22px]"><I.blueDoc /></C><C w="w-[6px]"><Sep /></C><C w="w-6"><I.gPlay1 /></C><C w="w-6"><I.gPlay2 /></C><C w="w-[10px]"><Low /></C>
        </div>
        <div className="grow border border-[#7f8590] flex flex-col overflow-hidden">
          <div className="grow flex flex-col">
            {tree.map(([g, ic, t], i) => {
              const Ic = I[ic];
              return (
                <div key={i} className="h-[19px] flex items-center whitespace-nowrap">
                  {g.split("").map((k, j) => <Guide key={j} k={k} />)}
                  <div className="w-[19px] flex justify-center shrink-0"><Ic /></div>
                  {t === "create_new_group" ? <span className="grow h-[19px] border border-r-0 border-dotted border-[#333] bg-[#efefef] leading-[16px]">{t}</span> : <span className={i === 1 ? "font-bold ml-[2px]" : "ml-[1px]"}>{t}</span>}
                </div>
              );
            })}
          </div>
          <div className="h-[16px] bg-[#f0f0f0] flex items-center">
            <C w="w-[17px]"><Chev r="rotate-90" /></C><div className="w-[92px] h-full bg-[#cdcdcd]" /><C w="w-[17px]" c="ml-auto"><Chev r="-rotate-90" /></C>
          </div>
        </div>
      </div>
      <div className="h-[21px] bg-[#f0f0f0] flex items-start pl-0.5">
        <div className={`${tabOn} w-[90px] h-[19px] -mt-px`}>Project Explorer</div>
        <div className={`${tabOff} w-[77px] h-[17px] -ml-px`}>Code Explorer</div>
      </div>
    </div>
  );
}

function Workspace() {
  return (
    <div className="w-[1136px] flex flex-col pt-[2px]">
      <div className="h-[22px] shrink-0 mr-0.5 bg-linear-to-b from-[#99b4d1] to-[#b9d1ea] flex items-center pl-1">
        <I.pen /><span className="ml-1 grow pt-0.5">Workspace</span>
        <div className="flex gap-px mr-1 pt-px"><Btn t="?" /><Btn t="r" /><div className="w-[24px] h-[15px] border border-[#5d1f1a] rounded-[2px] bg-[#cc4b3e] flex items-center justify-center"><svg width="9" height="9" viewBox="0 0 9 9"><path d="M1 1 l7 7 M8 1 l-7 7" stroke="#fff" strokeWidth="2.200" /></svg></div></div>
      </div>
      <div className="h-[26px] shrink-0 mr-0.5 bg-[#f0f0f0] border-b border-[#a0a0a0] flex items-end">
        <div className="w-[146px] h-[23px] border border-b-0 border-[#a0a0a0] bg-white flex items-center pl-1.5 -mb-px"><I.kt /><span className="ml-[5px] grow">create_new_group</span><svg width="9" height="9" viewBox="0 0 9 9" className="mr-2"><path d="M1 1 l7 7 M8 1 l-7 7" stroke="#8a8a8a" strokeWidth="2" /></svg></div>
        <div className="w-[234px] h-5 border border-b-0 border-l-0 border-[#a0a0a0] flex items-center pl-[3px]"><I.log /><span className="ml-[6px] grow whitespace-nowrap">Keyword Test Log [create_new_gro...</span><svg width="9" height="9" viewBox="0 0 9 9" className="mr-[6px]"><path d="M1 1 l7 7 M8 1 l-7 7" stroke="#8a8a8a" strokeWidth="2" /></svg></div>
        <div className="w-[17px] h-[17px] ml-auto mr-0.5 mb-[3px] border border-[#a0a0a0] flex items-center justify-center"><Chev /></div>
      </div>
      <div className="w-[1133px] h-[344px] shrink-0 border border-t-0 border-[#a0a0a0] p-0.5 flex flex-col">
        <div className="w-[1126px] h-[289px] shrink-0 border border-[#a0a0a0] p-0.5 flex bg-white">
          <div className="w-[155px] flex flex-col bg-[#f0f0f0] pr-[5px] shrink-0">
            <div className={`h-5 ${titleGrad} flex items-center pl-1`}><span className="grow pt-0.5">Operations</span><div className="mr-3"><Pin /></div></div>
            <div className="h-5 mt-[3px] border border-[#a0a0a0] bg-white flex items-center pl-0.5 shrink-0"><span className="italic text-[#444] grow pb-px">Search</span>
              <svg width="15" height="14" viewBox="0 0 15 14" fill="none"><circle cx="9" cy="5" r="4" stroke="#1d5fc0" strokeWidth="1.800" /><path d="M6 8 l-5 5" stroke="#1d5fc0" strokeWidth="2.200" /></svg>
              <div className="w-[15px] h-4 ml-0.5 mr-px border border-[#c8c8c8] bg-[#f3f3f3] flex items-center justify-center"><Down f="#888" /></div></div>
            <div className="h-[235px] mt-1 border border-[#7f8590] bg-white flex overflow-hidden">
              <div className="w-[131px] flex flex-col">
                <div className="h-[18px] shrink-0 border-b border-[#e3ecf7] pl-2 flex items-center pt-[3px]">Test Actions</div>
                {ops.map(([ic, t]) => { const Ic = I[ic]; return <div key={t} className="h-[23px] shrink-0 flex items-center pl-[7px] pt-0.5 whitespace-nowrap"><Ic /><span className="ml-1">{t}</span></div>; })}
                <svg width="16" height="6" viewBox="0 0 16 6" className="ml-[7px] mt-1.5 shrink-0"><path d="M4 6 a4 5 0 0 1 7 0" fill="#9db8d8" stroke="#58779e" /></svg>
              </div>
              <div className="w-[17px] bg-[#f0f0f0] flex flex-col items-center"><div className="h-[18px] flex items-center pt-1"><Chev r="rotate-180" /></div><div className="w-[15px] h-[109px] bg-[#cdcdcd]" /><div className="mt-auto mb-[6px] flex"><Chev /></div></div>
            </div>
          </div>
          <div className="w-[964px] flex flex-col bg-[#f0f0f0] text-[#808080] -ml-px grow">
            <div className="h-7 shrink-0 bg-[#f5f6f7] flex items-center whitespace-nowrap text-[12px]">
              <C w="w-2"><Grip /></C><C w="w-[24px]"><I.rec /></C><C w="w-[91px]"><span>Record New Test</span></C><C w="w-[24px]"><I.apprec /></C><C w="w-[84px]"><span>Append to Test</span></C>
              <C w="w-[24px]"><I.play /></C><C w="w-[53px]"><span>Run Test</span></C><C w="w-[6px]"><Sep /></C><C w="w-[23px]"><I.addv /></C><C w="w-[71px]"><span>Add Variable</span></C>
              <C w="w-6"><I.addv /></C><C w="w-[81px]"><span>Add Parameter</span></C><C w="w-[6px]"><Sep /></C>
              <C w="w-[24px]">{I.up("")}</C><C w="w-6">{I.up("rotate-180")}</C><C w="w-[24px]">{I.up("-rotate-90")}</C><C w="w-6">{I.up("rotate-90")}</C><C w="w-[6px]"><Sep /></C><C w="w-6"><I.note /></C>
            </div>
            <div className="h-[250px] mt-1 w-[965px] border border-[#7f8590] bg-white flex text-black overflow-hidden">
              <div className="w-[946px] flex flex-col">
                <div className="h-[19px] shrink-0 flex border-b border-[#e3ecf7] [&>div]:border-r [&>div]:border-[#e3ecf7] [&>div]:pl-[3px] [&>div]:flex [&>div]:items-center">
                  <div className="w-6" /><div className="w-[231px]">Item</div><div className="w-[230px]">Operation</div><div className="w-[229px]">Value</div><div className="grow !border-r-0">Description</div>
                </div>
                {steps.map(([g, ic, a, b, v, d], i) => {
                  const Ic = ic === "chrome" ? Chrome : I[ic];
                  const sel = i === 11;
                  const shot = i !== 1 && i !== 2;
                  return (
                    <div key={i} className={`shrink-0 flex items-center whitespace-nowrap ${i === 2 ? "h-[18px]" : "h-[19px]"}`}>
                      <div className="w-6 h-full bg-[#f4f5f7] border-b border-r border-[#9b9ea4] flex items-center justify-center shrink-0">
                        {sel && <svg width="8" height="15" viewBox="0 0 8 15" className="shrink-0"><path d="M0.500 0.500 l7 7 -7 7 z" fill="#35b33c" stroke="#1b7a22" /></svg>}{shot && <I.shot />}
                      </div>
                      <div className="w-[231px] h-full pl-[20px] flex items-center shrink-0">
                        {g.split("").map((k, j) => <Guide key={j} k={k} />)}
                        <div className="w-[19px] flex justify-center shrink-0"><Ic /></div>
                        <div className={`h-full flex items-center pl-px grow ${sel ? "bg-[#0000f4] text-white border-y border-dotted border-[#d8d840]" : ""}`}>{a}</div>
                      </div>
                      <div className={`h-full flex items-center grow ${sel ? "bg-[#3399ff] text-white border border-l-0 border-dotted border-[#c86b10]" : ""}`}>
                        <span className="w-[229px] pl-[2px]">{b}</span><span className="w-[229px] pl-[3px]">{v}</span><span className="pl-[3px]">{d}</span>
                      </div>
                    </div>
                  );
                })}
                <div className="w-6 grow bg-[#f4f5f7] border-r border-[#9b9ea4]" />
              </div>
              <div className="grow bg-[#f0f0f0] flex flex-col items-center"><div className="pt-[7px] h-[90px]"><Chev r="rotate-180" /></div><div className="w-[15px] h-[63px] bg-[#cdcdcd]" /><div className="mt-auto mb-[5px] flex"><Chev /></div></div>
            </div>
          </div>
        </div>
        <div className="h-7 shrink-0 bg-[#f0f0f0] flex items-start">
          <div className={`${tabOn} w-[84px] h-[21px] -mt-px gap-[5px] pt-0.5`}><I.kt />Test Steps</div>
          <div className={`${tabOff} w-[73px] h-[19px] -ml-px gap-[5px]`}><I.vars />Variables</div>
          <div className={`${tabOff} w-[84px] h-[19px] -ml-px gap-1`}><I.params />Parameters</div>
        </div>
        <div className={`h-[22px] shrink-0 ${titleGrad} flex items-center pl-[3px]`}><I.vis /><span className="ml-[5px] grow pt-0.5 leading-[15px]">Test Visualizer</span><div className="mr-1.5"><Btn t="r" /></div></div>
      </div>
      <div className="h-[5px] shrink-0 bg-[#f0f0f0] mr-0.5" />
      <div className="w-[1133px] h-[163px] shrink-0 border border-[#a0a0a0] p-0.5 flex flex-col bg-white">
        <div className={`h-[22px] shrink-0 ${titleGrad} flex items-center pl-[5px]`}><I.stack /><span className="ml-[3px] grow pt-0.5 leading-[15px]">Call Stack</span><div className="flex items-center gap-[7px] mr-1.5"><Btn t="?" /><Pin /><Btn t="x" /></div></div>
        <div className="h-[134px] border border-[#7f8590]"><div className="h-[19px] border-b border-[#dfe9fb] bg-[#fcfcfd] pl-[3px] flex items-center pt-px">Call Stack</div></div>
      </div>
      <div className="h-[21px] shrink-0 bg-[#f0f0f0] flex items-start mr-0.5">
        <div className={`${tabOn} w-[59px] h-[19px] -mt-px`}>Call Stack</div>
        <div className={`${tabOff} w-[39px] h-[17px] -ml-px`}>Locals</div>
        <div className={`${tabOff} w-[61px] h-[17px] -ml-px`}>Watch List</div>
        <div className={`${tabOff} w-[66px] h-[17px] -ml-px`}>Breakpoints</div>
      </div>
    </div>
  );
}

function TestComplete() {
  return (
    <div className={`w-[1366px] h-[728px] flex flex-col bg-white relative text-[11px] text-black overflow-hidden ${UI}`}>
      <div className="h-[23px] shrink-0 bg-[#ebebeb] border-b border-[#dadada] flex items-center">
        <div className="w-[581px] pl-0.5"><TcLogo w={16} h={16} /></div>
        <span className="grow font-['Open_Sans',sans-serif] font-stretch-normal text-[14.500px] text-[#333] tracking-[-0.15px]">TestComplete - E:\trail\trail.pjs</span>
        <div className="flex h-[19px] self-start">
          <div className="w-5 flex items-center justify-center pt-1"><div className="w-2 h-[2px] bg-[#222]" /></div>
          <div className="w-[34px] flex items-center justify-center"><Restore /></div>
          <div className="w-[45px] bg-[#bcbcbc] flex items-center justify-center mr-[3px]"><svg width="9" height="8" viewBox="0 0 9 8"><path d="M1 0.500 l7 7 M8 0.500 l-7 7" stroke="#fff" strokeWidth="1.700" /></svg></div>
        </div>
      </div>
      <div className="h-[25px] shrink-0 bg-[#f5f6f7] border-b border-[#999] flex items-center text-[11.500px]">
        <C w="w-[15px]"><Grip /></C>
        <span className="w-[30px]"><u>F</u>ile</span><span className="w-8"><u>E</u>dit</span><span className="w-[37px]"><u>V</u>iew</span><span className="w-[34px]">Te<u>s</u>t</span><span className="w-[47px]"><u>D</u>ebug</span><span className="w-[41px]"><u>T</u>ools</span><span className="w-[33px]"><u>H</u>elp</span><Low />
      </div>
      <div className="h-[27px] shrink-0 bg-[#f5f6f7] flex items-center whitespace-nowrap text-[12px]">
        {mainBar.map(([w, n], i) => <C key={i} w={w}>{n}</C>)}
      </div>
      <div className="h-6 shrink-0 bg-[#f0f0f0] border-b border-[#a0a0a0] flex items-end">
        <div className="w-[103px] h-5 border border-b-0 border-[#a0a0a0] bg-white flex items-center justify-center -mb-px">Project Workspace</div>
        <div className="w-[83px] h-[17px] border border-b-0 border-l-0 border-[#a0a0a0] flex items-center justify-center pt-0.5">Object Browser</div>
      </div>
      <div className="h-[586px] w-[1364px] shrink-0 border border-t-0 border-[#a0a0a0] flex pb-0.5">
        <Explorer />
        <div className="w-[5px] shrink-0 bg-[#f0f0f0]" />
        <Workspace />
      </div>
      <div className="h-6 shrink-0 border-b border-[#d2d2d2] flex items-end pl-px text-[#a0a0a0]">
        <div className="w-[70px] h-[18px] border border-b-0 border-[#a0a0a0] bg-[#f0f0f0] flex items-center justify-center">Bookmarks</div>
        <div className="w-[131px] h-[18px] border border-b-0 border-[#a0a0a0] bg-[#f0f0f0] flex items-center justify-center">Search/Replace Results</div>
        <div className="w-[43px] h-[18px] border border-b-0 border-[#a0a0a0] bg-[#f0f0f0] flex items-center justify-center text-black">To Do</div>
      </div>
      <div className="grow bg-[#f0f0f0] flex items-center text-[#a0a0a0] [&>div]:h-[17px] [&>div]:border-r [&>div]:border-[#d2d2d2] [&>div]:flex [&>div]:items-center">
        <div className="w-[54px]" /><div className="w-[54px]" /><div className="w-[97px] gap-2 pl-[3px]"><span>CAPS</span><span>NUM</span><span>SCRL</span></div><div className="w-[34px]" />
      </div>
      <svg className="absolute left-[1342px] top-[28px]" width="14" height="15" viewBox="0 0 14 15" fill="none"><path d="M1 11 h11 l-2 -3 v-3 a3.500 3.500 0 0 0 -7 0 v3 z M5 13 h3" stroke="#222" strokeWidth="1.500" /></svg>
      <div className="absolute left-[1245px] top-6 w-[103px] h-[41px] rounded-[5px] border-2 border-[#a8a196] bg-linear-to-b from-[#f4f2ee] to-[#e3dfd8] flex items-center shadow-[0_0_0_1px_#f6f4f0]">
        <div className="w-[39px] h-full border-r-2 border-[#a8a196] bg-linear-to-b from-[#e6e6e6] to-[#c4c2be] flex items-center justify-center"><TcLogo w={32} h={32} color="#2277b3" /></div>
        <div className="ml-[6px] w-[22px] h-[22px] rounded-[4px] border border-[#8d8371] bg-linear-to-b from-[#ece9e2] to-[#b9b2a4] flex items-center justify-center gap-[2px]"><div className="w-[3px] h-[9px] bg-[#3d3d3d]" /><div className="w-[3px] h-[9px] bg-[#3d3d3d]" /></div>
        <div className="ml-[3px] w-[22px] h-[22px] rounded-[4px] border border-[#8d8371] bg-linear-to-b from-[#ece9e2] to-[#b9b2a4] flex items-center justify-center"><div className="w-2 h-2 bg-[#3d3d3d]" /></div>
      </div>
      <div className="absolute left-[1262px] top-[68px] w-[86px] h-[43px] bg-white border border-[#7c7c7c] flex flex-col items-stretch px-[3px] text-right">
        <svg className="absolute -top-[7px] right-[3px]" width="10" height="8" viewBox="0 0 10 8"><path d="M0 7.500 L7.500 0.500 V7.500" fill="#fff" stroke="#7c7c7c" /><path d="M1 7.600 h6" stroke="#fff" strokeWidth="1.500" /></svg>
        <span className="h-[19px] leading-[21px] pr-1">Stopping...</span>
        <div className="h-px bg-black" />
        <span className="leading-[16px] pr-1">group_admin</span>
      </div>
    </div>
  );
}

/* ---------- taskbar ---------- */
function Taskbar({ tray }) {
  return (
    <div className="w-[1366px] h-10 relative overflow-hidden">
      <svg className="absolute inset-0" width="1366" height="40" viewBox="0 0 1366 40">
        <defs>
          <linearGradient id="wall" x1="0" x2="1"><stop offset="0" stopColor="#bd8c2c" /><stop offset=".35" stopColor="#bb8728" /><stop offset=".5" stopColor="#b4752a" /></linearGradient>
          <linearGradient id="tan" x1="0" x2="1"><stop offset="0" stopColor="#bda878" /><stop offset="1" stopColor="#c3a974" /></linearGradient>
        </defs>
        <rect width="1366" height="40" fill="url(#wall)" />
        <path d="M0 0 H75 L62 40 H0 Z" fill="#b7933f" />
        <path d="M673 0 H752 L759 40 H668 Z" fill="#9a7c3d" />
        <path d="M752 0 H1180 L1262 40 H759 Z" fill="url(#tan)" />
        <path d="M1175 0 H1366 V40 H1250 Z" fill="#c19a3a" />
        <path d="M1175 0 H1198 L1270 40 H1244 Z" fill="#c08e24" />
        <path d="M0 0.500 H1366" stroke="#8a6a2c" opacity=".5" />
      </svg>
      <div className="relative h-full flex items-center">
        <svg width="28" height="27" viewBox="0 0 28 27" className="ml-[11px]" fill="#fff"><path d="M0 4 L12 2.300 V13 H0 Z M13 2.100 L27 0 V13 H13 Z M0 14 H12 V24.700 L0 23 Z M13 14 H27 V27 L13 24.900 Z" /></svg>
        <div className="ml-[27px] relative w-[31px] h-[31px] text-[#45b8ee]"><FaInternetExplorer size={30} className="drop-shadow-[0_0_1px_#0b5d9c]" /><svg className="absolute left-0 top-0" width="31" height="31" viewBox="0 0 31 31" fill="none"><path d="M28 10 C31 1 24 0 16 5 C6 11 0 22 1 27 C2 31 7 29 10 27" stroke="#f5c22c" strokeWidth="2.200" /></svg></div>
        <svg width="34" height="30" viewBox="0 0 34 30" className="ml-[28px]"><path d="M2 3 h8 l2 3 h19 v20 h-29 z" fill="#f3dc8c" stroke="#c9a64a" /><path d="M5 1 h5 v5 h-5 z" fill="#3c9c46" /><path d="M13 3 h6 v5 h-6 z" fill="#d44a33" /><path d="M22 5 h6 v5 h-6 z" fill="#4b97d8" /><path d="M1 9 h32 v18 h-32 z" fill="#f9e9ad" stroke="#d4b45c" /><path d="M5 17 h24 v12 h-5 v-7 h-13 v7 h-6 z" fill="#9fd4ef" stroke="#4f9cc8" /></svg>
        <svg width="30" height="30" viewBox="0 0 30 30" className="ml-[30px]"><rect width="30" height="30" fill="#068a06" /><path d="M4 9 L24 6.500 V27 L4 24 Z" fill="#fff" /><path d="M9 9 V6 a3.500 3 0 0 1 7 0 V8" fill="none" stroke="#fff" strokeWidth="1.500" /><path d="M8 13 l4.500 -.6 v4.600 h-4.500 z M13.500 12.200 l5 -.6 v5.400 h-5 z M8 18 h4.500 v4.400 l-4.500 -.7 z M13.500 18 h5 v5.300 l-5 -.7 z" fill="#068a06" /></svg>
        <div className="ml-[18px] w-[54px] h-[39px] mt-px border border-[#fff8] outline outline-[#7d5a1c] bg-[#e3cfa4aa] flex items-center justify-center"><Chrome s={30} /></div>
        <div className="w-[4px] h-[39px] mt-px border-r border-[#fff8] bg-[#c99e54]" />
        <svg width="30" height="30" viewBox="0 0 30 30" className="ml-[18px]"><circle cx="15" cy="15" r="14.500" fill="#e2571b" /><circle cx="17" cy="12" r="11" fill="#1e5ca8" /><path d="M1 8 C3 4 6 3 8 6 C13 6 14 9 11 11 C8 13 10 18 15 18 C20 19 23 16 23 12 C26 14 25 20 21 23 C27 21 29 15 28 9 C31 16 29 23 24 27 C16 32 5 29 2 20 C0 15 0 11 1 8" fill="#f08a1d" /><path d="M28 8 C30 14 29 21 24 26 C26 20 27 14 25 7 Z" fill="#f7c62f" /></svg>
        <div className="ml-[17px] w-[60px] h-[39px] mt-px border border-[#e3cfa4aa] bg-[#d8c08a66] flex items-center justify-center"><TcLogo w={32} h={32} /></div>
        {tray && (
          <div className="ml-auto flex items-center mr-[17px] text-white font-['Open_Sans',sans-serif] text-[12px] leading-[17px]">
            <svg width="8" height="5" viewBox="0 0 8 5" className="mr-4 mt-0.5"><path d="M0 5 h8 l-4 -5 z" fill="#fff" stroke="#6b5120" strokeWidth=".5" /></svg>
            <svg width="90" height="18" viewBox="0 0 90 18" fill="none" stroke="#fff" strokeWidth="1.400">
              <path d="M1.500 1 v16" /><path d="M2.500 2 h6 v2 h6 l-1.500 3 1 3 h-5 v-2 h-6.500 z" fill="#fff" />
              <path d="M28 1 v3 M31 1 v3 M27 4.500 h5 v3 l-1.500 2 h-1.500 l-2 -2 z M29.500 9 v8" /><path d="M33 4 h7 v12 h-7 z M35 2 h3" />
              <path d="M56 4 h8.500 v8.500 h-10 M60 12.500 v3.500 M56 16.500 h7 M50 1.500 h4 v4 h-4 z M52 6 v8" />
              <path d="M74 6.500 h3 l3.500 -4.500 v14 l-3.500 -4.500 h-3 z" fill="#fff" /><path d="M83 6 q2 3 0 6 M86 4 q3.500 5 0 10" />
            </svg>
            <div className="ml-[12px] w-6 text-center mt-[-2px]">ENG<br />US</div>
            <div className="ml-[14px] w-[54px] text-center whitespace-nowrap tracking-[-0.6px] mt-[-2px]">10:00 AM<br />8/18/2016</div>
          </div>
        )}
      </div>
    </div>
  );
}

export default function App() {
  return (
    <div className="w-[2732px] h-[768px] overflow-hidden flex flex-col">
      <div className="flex"><Browser /><TestComplete /></div>
      <div className="flex"><Taskbar /><Taskbar tray /></div>
    </div>
  );
}
